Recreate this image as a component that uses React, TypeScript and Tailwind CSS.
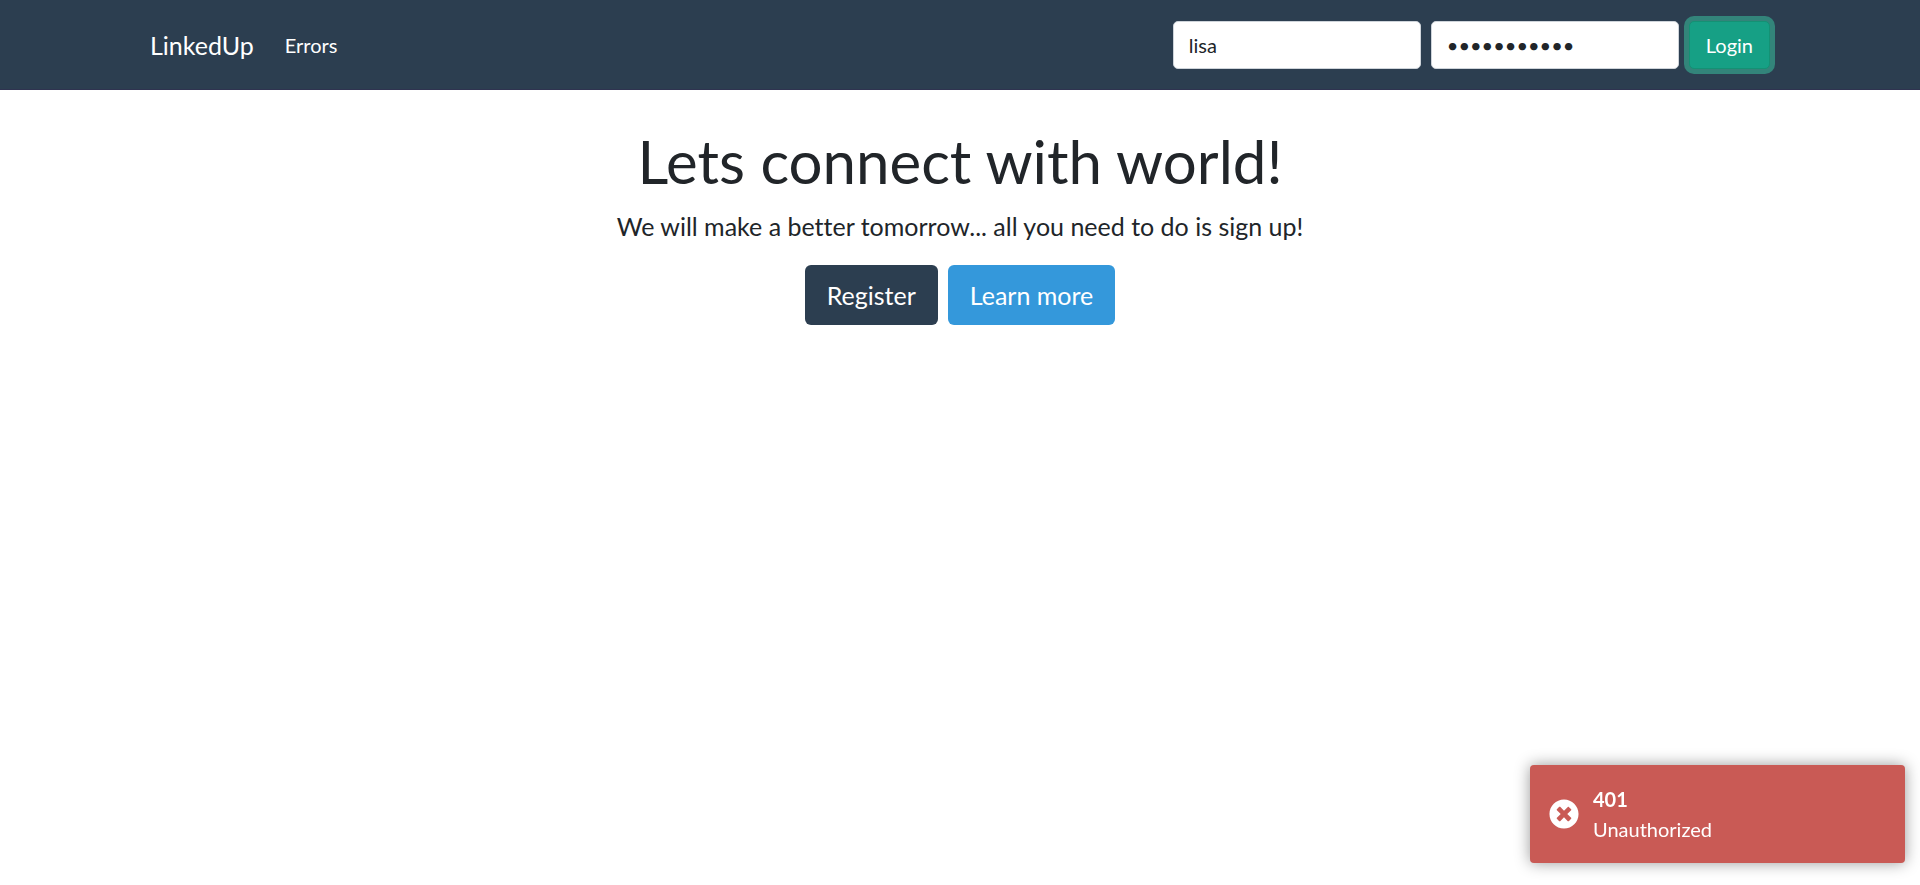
const fieldClass =
  "h-12 w-[248px] rounded-[5px] border border-[#ced4da] bg-white px-[15px] text-[20px] leading-[30px] text-[#212529] outline-none";

function Header() {
  return (
    <header className="border-b border-[#2f3350] bg-[#2c3e50] py-5">
      <nav className="mx-auto flex min-h-[49px] max-w-[1650px] flex-wrap items-center px-[15px] text-white">
        <a href="#" className="mr-5 text-[25px] leading-[38px]">LinkedUp</a>
        <a href="#errors" className="px-[11px] text-[20px] leading-[30px]">Errors</a>
        <form className="ml-auto flex items-center gap-[10px]" onSubmit={(e) => e.preventDefault()}>
          <input aria-label="Username" name="username" type="text" defaultValue="lisa" className={fieldClass} />
          <input aria-label="Password" name="password" type="password" defaultValue="abcdefghijk" className={fieldClass} />
          <button type="submit" className="h-12 rounded-[5px] border border-[#149174] bg-[#16a085] px-4 text-[20px] leading-[30px] ring-[5px] ring-[#33847a]">
            Login
          </button>
        </form>
      </nav>
    </header>
  );
}

function Hero() {
  return (
    <main className="mt-[35px] px-4 text-center">
      <h1 className="mb-[10px] text-[60px] leading-[72px]">Lets connect with world!</h1>
      <p className="mb-5 text-[25px] leading-[38px]">
        We will make a better tomorrow... all you need to do is sign up!
      </p>
      <div className="flex justify-center gap-[10px] text-[25px] leading-[38px] text-white">
        <button type="button" className="h-[60px] rounded-[6px] bg-[#2c3e50] px-[22px]">Register</button>
        <button type="button" className="h-[60px] rounded-[6px] bg-[#3498db] px-[22px]">Learn more</button>
      </div>
    </main>
  );
}

function Toast() {
  return (
    <div role="alert" className="fixed right-[15px] bottom-[22px] flex w-[375px] items-center gap-[14px] rounded-[4px] bg-[#c95a55] px-[19px] py-[19px] text-[20px] leading-[30px] text-white shadow-[0_0_15px_#999999]">
      <svg viewBox="0 0 512 512" className="size-[30px] shrink-0 fill-current" aria-hidden="true">
        <path d="M256 8C119 8 8 119 8 256s111 248 248 248 248-111 248-248S393 8 256 8zm121.600 313.100c4.700 4.700 4.700 12.300 0 17L338 377.600c-4.700 4.700-12.300 4.700-17 0L256 312l-65.100 65.600c-4.700 4.700-12.300 4.700-17 0L134.400 338c-4.700-4.700-4.700-12.300 0-17l65.600-65-65.600-65.100c-4.700-4.700-4.700-12.300 0-17l39.600-39.600c4.700-4.700 12.300-4.700 17 0l65 65.700 65.100-65.600c4.700-4.700 12.300-4.700 17 0l39.600 39.600c4.700 4.700 4.700 12.300 0 17L312 256l65.600 65.100z" />
      </svg>
      <div>
        <div className="font-bold">401</div>
        <div>Unauthorized</div>
      </div>
    </div>
  );
}

export default function App() {
  return (
    <div className="min-h-screen bg-white font-['Lato',sans-serif] text-[20px] leading-[30px] text-[#212529] [font-variant-ligatures:none]">
      <Header />
      <Hero />
      <Toast />
    </div>
  );
}
